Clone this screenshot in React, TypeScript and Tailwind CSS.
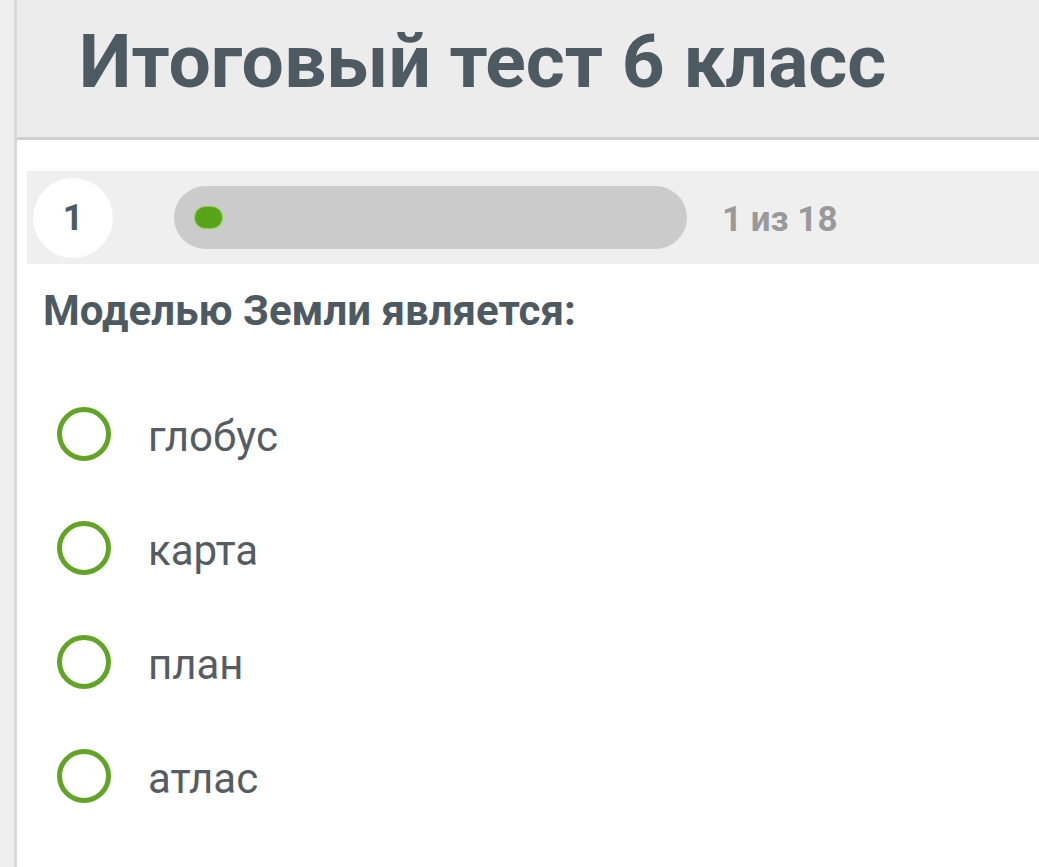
import React from "react";

const options = ["глобус", "карта", "план", "атлас"];

export default function App() {
  return (
    <div
      className="flex min-h-[867px] w-[1039px] overflow-hidden bg-white"
      style={{ fontFamily: "Roboto, 'Noto Sans', sans-serif" }}
    >
      <div className="w-[14px] shrink-0 bg-[#efefef]" />
      <div className="w-[3px] shrink-0 bg-[#d9d9d9]" />
      <div className="flex min-w-0 flex-1 flex-col">
        <div className="flex h-[140px] items-center border-b-[3px] border-[#cfcfcf] bg-[#ececec] pl-[62px] pb-[14px]">
          <h1 className="whitespace-nowrap text-[75px] font-bold leading-none text-[#4e5a62]">
            Итоговый тест 6 класс
          </h1>
        </div>
        <div className="ml-[10px] mt-[31px] flex h-[93px] items-center bg-[#efefef] pl-[6px]">
          <div className="flex h-[80px] w-[80px] items-center justify-center rounded-full bg-white text-[36px] font-bold leading-none text-[#4e5a62]">
            1
          </div>
          <div className="ml-[61px] flex h-[63px] w-[513px] items-center rounded-full bg-[#cbcbcb] pl-[21px]">
            <div className="h-[21px] w-[27px] rounded-full bg-[#58a418] ring-1 ring-[#8fcf5a]" />
          </div>
          <div className="ml-[35px] mt-[6px] text-[35px] font-bold text-[#999999]">1 из 18</div>
        </div>
        <div className="mt-[23px] pl-[26px] text-[42px] font-bold leading-[48px] text-[#4e5a62]">
          Моделью Земли является:
        </div>
        <div className="mt-[71px] flex flex-col gap-[58px] pl-[40px]">
          {options.map((o) => (
            <div key={o} className="flex h-[56px] items-center">
              <div className="h-[54px] w-[54px] rounded-full border-[5px] border-[#62a425]" />
              <span className="ml-[37px] mt-[6px] text-[42px] leading-none text-[#555d63]">{o}</span>
            </div>
          ))}
        </div>
      </div>
    </div>
  );
}
